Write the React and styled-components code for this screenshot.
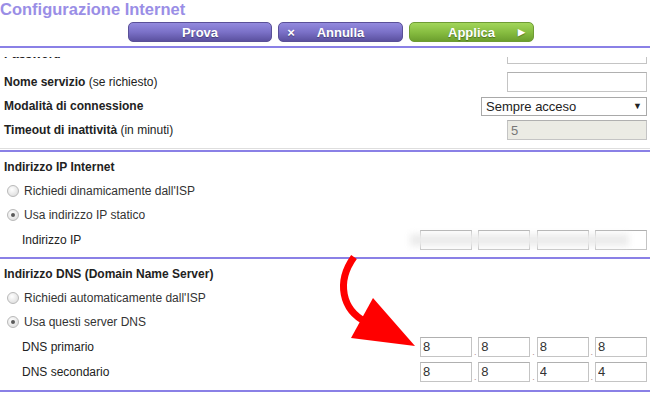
import React from "react";
import styled, { createGlobalStyle, css } from "styled-components";

const GlobalStyle = createGlobalStyle`
  html, body {
    margin: 0;
    padding: 0;
    background: #fff;
  }
  body {
    font-family: "Liberation Sans", Arial, sans-serif;
    color: #333;
    overflow: hidden;
  }
`;

const PURPLE = "#8a80e6";

const Page = styled.div`
  position: relative;
  width: 650px;
  height: 402px;
  overflow: hidden;
  display: flex;
  flex-direction: column;
`;

const Header = styled.header`
  padding-bottom: 9px;
  background: #fff;
`;

const Title = styled.h1`
  margin: 0;
  font-size: 16.5px;
  line-height: 18px;
  font-weight: 700;
  color: #9a8ee6;
`;

const ButtonBar = styled.div`
  display: flex;
  gap: 6px;
  margin-top: 4px;
  padding-left: 128px;
`;

const ActionButton = styled.div`
  display: grid;
  grid-template-columns: 24px 1fr 24px;
  align-items: center;
  width: ${(p) => p.$width}px;
  height: 20px;
  box-sizing: border-box;
  border-radius: 5px;
  color: #fff;
  font-size: 13px;
  font-weight: 700;
  text-shadow: 0 1px 1px rgba(0, 0, 0, 0.35);
  ${(p) =>
    p.$green
      ? css`
          background: linear-gradient(#a2d65a, #85bb3f 55%, #6c9f2e);
          border: 1px solid #6f9c35;
        `
      : css`
          background: linear-gradient(#938ade, #7b71c8 50%, #5b519f);
          border: 1px solid #5a5098;
        `}

  span {
    text-align: center;
  }
`;

const Rule = styled.div`
  height: 2px;
  margin-top: 4px;
  background: ${PURPLE};
`;

const Scroller = styled.main`
  flex: 1;
  overflow: hidden;
`;

const Content = styled.div`
  margin-top: -15px;
`;

const Section = styled.section`
  ${(p) =>
    p.$plain
      ? css`
          padding-bottom: 6px;
          border-bottom: 1px solid #dedede;
        `
      : css`
          margin-top: ${p.$first ? 1 : 0}px;
          padding: 3px 0 5px;
          border-top: 2px solid ${PURPLE};
        `}
  ${(p) =>
    p.$last &&
    css`
      padding-bottom: 6px;
      border-bottom: 2px solid ${PURPLE};
    `}
`;

const Row = styled.div`
  display: flex;
  align-items: center;
  justify-content: space-between;
  height: ${(p) => p.$h || 24}px;
  padding: 0 3px 0 ${(p) => (p.$indent ? 22 : 4)}px;
  margin-bottom: ${(p) => (p.$spaced ? 4 : 0)}px;
  font-size: 12px;
`;

const Label = styled.span`
  color: #222;
  b {
    font-weight: 700;
  }
`;

const Heading = styled.div`
  display: flex;
  align-items: center;
  height: 24px;
  padding-left: 4px;
  font-size: 12px;
  font-weight: 700;
  color: #222;
`;

const RadioRow = styled.label`
  display: flex;
  align-items: center;
  gap: 5px;
  height: 24px;
  padding-left: 7px;
  font-size: 12px;
  color: #333;
`;

const Radio = styled.span`
  position: relative;
  width: 12px;
  height: 12px;
  box-sizing: border-box;
  border-radius: 50%;
  border: 1px solid #b9b9b9;
  background: radial-gradient(circle at 40% 35%, #fff, #e3e3e3 70%, #d0d0d0);

  ${(p) =>
    p.$checked &&
    css`
      &::after {
        content: "";
        position: absolute;
        left: 3px;
        top: 3px;
        width: 4px;
        height: 4px;
        border-radius: 50%;
        background: #5a5a5a;
      }
    `}
`;

const TextBox = styled.input`
  width: ${(p) => p.$w || 140}px;
  height: 20px;
  box-sizing: border-box;
  margin: 0;
  padding: 0 3px;
  border: 1px solid #c4c4c4;
  border-top-color: #b0b0b0;
  border-radius: 0;
  font-family: inherit;
  font-size: 13px;
  color: #333;
  background: #fff;
  outline: none;

  &:disabled {
    background: #ebebe4;
    color: #777;
  }
`;

const Select = styled.div`
  display: flex;
  align-items: center;
  justify-content: space-between;
  width: 166px;
  height: 19px;
  box-sizing: border-box;
  padding: 0 4px 0 4px;
  border: 1px solid #a9a9a9;
  font-size: 13px;
  color: #222;
  background: #fff;

  i {
    font-style: normal;
    font-size: 9px;
    color: #222;
  }
`;

const IpGroup = styled.div`
  position: relative;
  display: flex;
  align-items: flex-end;

  ${(p) =>
    p.$hidden &&
    css`
      &::after {
        content: "";
        position: absolute;
        left: -10px;
        right: 18px;
        top: 4px;
        height: 12px;
        background: #ececec;
        filter: blur(3px);
      }
    `}
`;

const Octet = styled(TextBox)`
  width: 52px;
  padding: 0 2px;
`;

const Dot = styled.span`
  width: 6.33px;
  text-align: center;
  font-size: 9px;
  line-height: 10px;
  color: #b08a8a;
`;

const ArrowLayer = styled.svg`
  position: absolute;
  left: 0;
  top: 0;
  pointer-events: none;
`;

const IpField = ({ values, hidden }) => (
  <IpGroup $hidden={hidden}>
    {values.map((v, i) => (
      <React.Fragment key={i}>
        {i > 0 && <Dot>{hidden ? "" : "."}</Dot>}
        <Octet readOnly value={v} />
      </React.Fragment>
    ))}
  </IpGroup>
);

export default function App() {
  return (
    <>
      <GlobalStyle />
      <Page>
        <Header>
          <Title>Configurazione Internet</Title>
          <ButtonBar>
            <ActionButton $width={144}>
              <span />
              <span>Prova</span>
              <span />
            </ActionButton>
            <ActionButton $width={125}>
              <span>×</span>
              <span>Annulla</span>
              <span />
            </ActionButton>
            <ActionButton $width={125} $green>
              <span />
              <span>Applica</span>
              <span style={{ fontSize: 9 }}>▶</span>
            </ActionButton>
          </ButtonBar>
          <Rule />
        </Header>

        <Scroller>
          <Content>
            <Section $plain>
              <Row $spaced>
                <Label>
                  <b>Password</b>
                </Label>
                <TextBox readOnly value="" />
              </Row>
              <Row>
                <Label>
                  <b>Nome servizio</b> (se richiesto)
                </Label>
                <TextBox readOnly value="" />
              </Row>
              <Row>
                <Label>
                  <b>Modalità di connessione</b>
                </Label>
                <Select>
                  <span>Sempre acceso</span>
                  <i>▼</i>
                </Select>
              </Row>
              <Row>
                <Label>
                  <b>Timeout di inattività</b> (in minuti)
                </Label>
                <TextBox disabled value="5" />
              </Row>
            </Section>

            <Section $first>
              <Heading>Indirizzo IP Internet</Heading>
              <RadioRow>
                <Radio />
                Richiedi dinamicamente dall'ISP
              </RadioRow>
              <RadioRow>
                <Radio $checked />
                Usa indirizzo IP statico
              </RadioRow>
              <Row $indent $h={25}>
                <Label>Indirizzo IP</Label>
                <IpField values={["", "", "", ""]} hidden />
              </Row>
            </Section>

            <Section $last>
              <Heading>Indirizzo DNS (Domain Name Server)</Heading>
              <RadioRow>
                <Radio />
                Richiedi automaticamente dall'ISP
              </RadioRow>
              <RadioRow>
                <Radio $checked />
                Usa questi server DNS
              </RadioRow>
              <Row $indent $h={25}>
                <Label>DNS primario</Label>
                <IpField values={["8", "8", "8", "8"]} />
              </Row>
              <Row $indent $h={25}>
                <Label>DNS secondario</Label>
                <IpField values={["8", "8", "4", "4"]} />
              </Row>
            </Section>
          </Content>
        </Scroller>

        <ArrowLayer width="650" height="402" viewBox="0 0 650 402">
          <path
            d="M354 257 C 336 282, 342 310, 366 322"
            fill="none"
            stroke="#ff0000"
            strokeWidth="7"
          />
          <polygon points="373,298 351,338 415,346" fill="#ff0000" />
        </ArrowLayer>
      </Page>
    </>
  );
}
